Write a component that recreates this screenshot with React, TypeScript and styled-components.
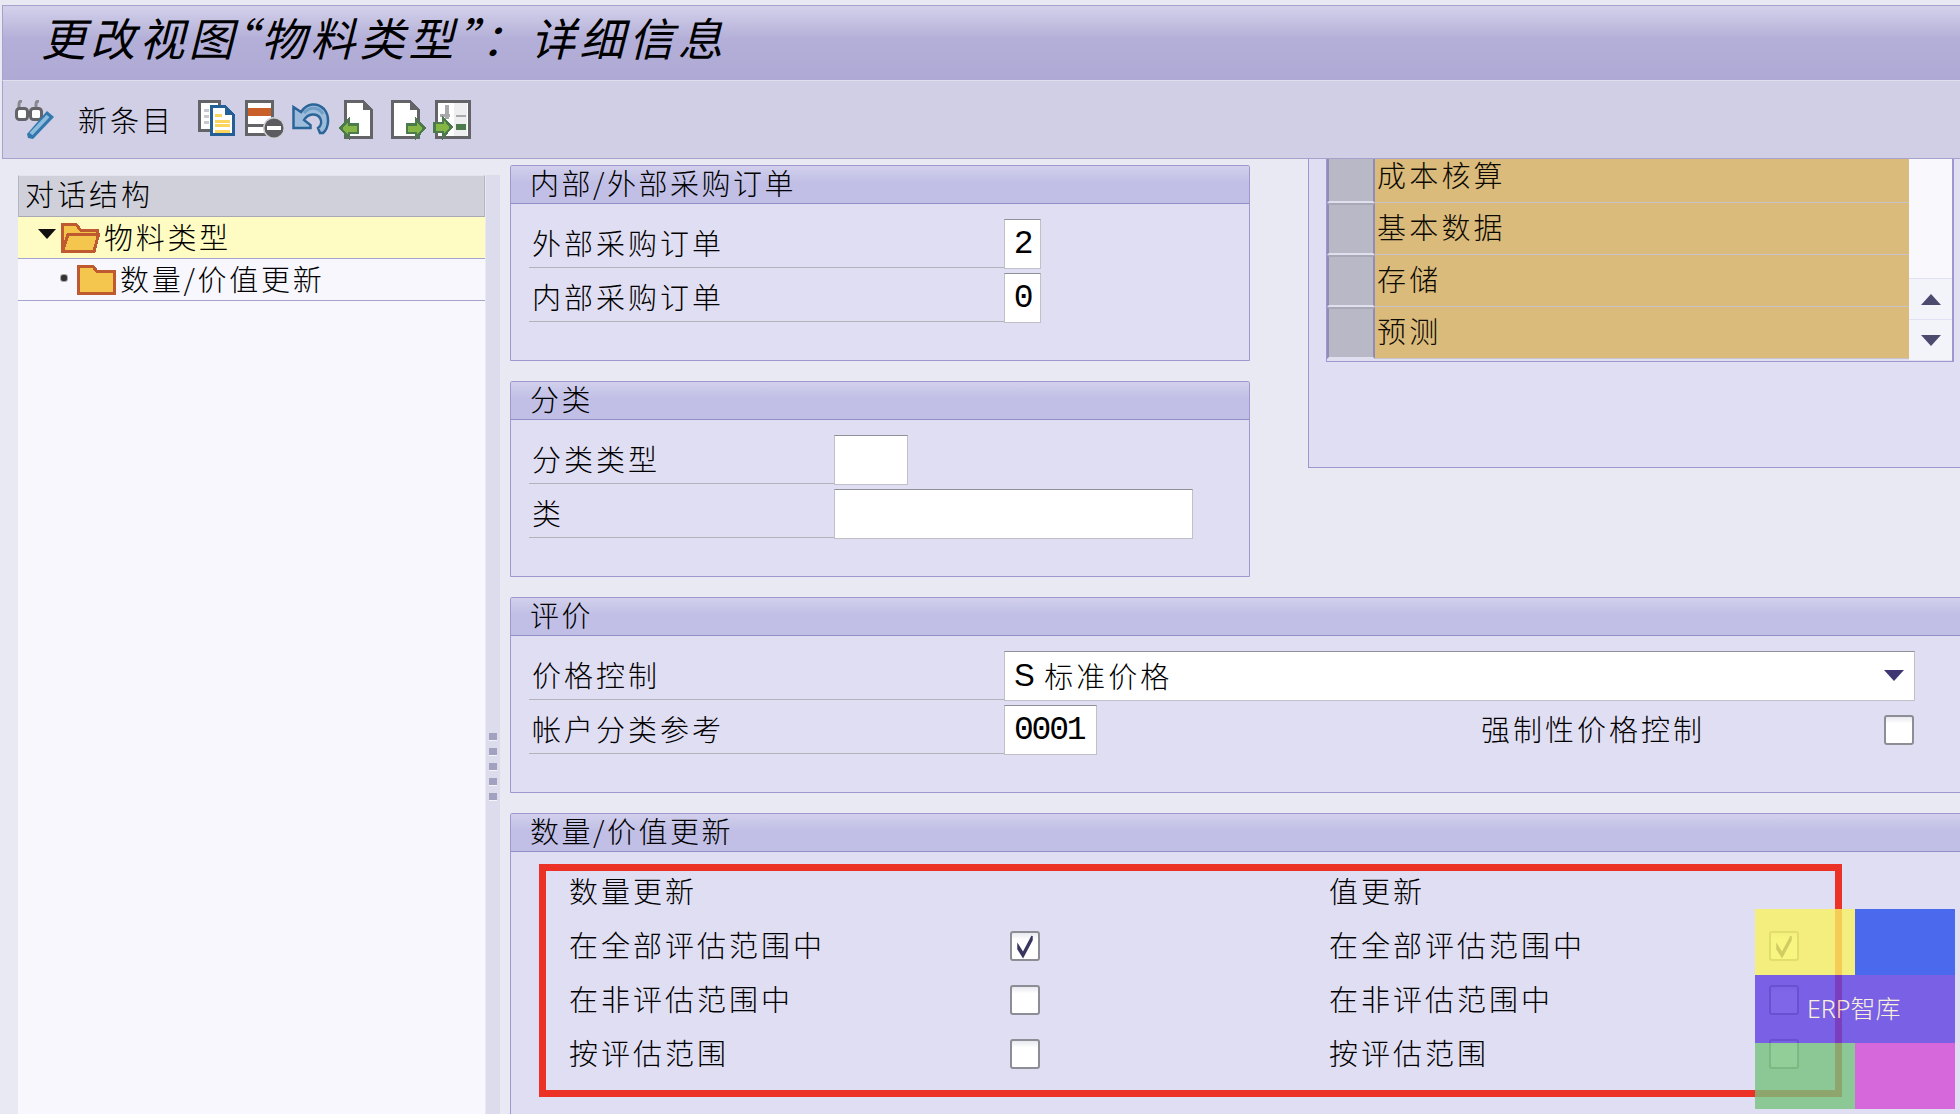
import React from "react";
import styled, { createGlobalStyle } from "styled-components";

const CJK = `"Noto Sans CJK SC", "Noto Sans", sans-serif`;

const Global = createGlobalStyle`
  html, body { margin: 0; padding: 0; background: #e9e9f3; }
  * { box-sizing: border-box; }
  body { font-family: ${CJK}; color: #000; }
`;

const Page = styled.div`
  width: 1960px;
  height: 1114px;
  overflow: hidden;
  position: relative;
  display: flex;
  flex-direction: column;
  padding-top: 5px;
  background: #e9e9f3;
  font-weight: 300;
  font-size: 29px;
  letter-spacing: 3px;
`;

const TitleBar = styled.div`
  height: 76px;
  margin-left: 2px;
  padding: 0 0 14px 38px;
  display: flex;
  align-items: center;
  background: linear-gradient(#d3d1ea 0, #b3afd8 45%, #aeaad5 100%);
  border-top: 1px solid #a5a2cc;
  border-left: 1px solid #a5a2cc;
  border-bottom: 1px solid #e0dff0;
`;

const TitleText = styled.h1`
  margin: 0;
  font-size: 45px;
  font-weight: 400;
  font-style: italic;
  letter-spacing: 4.2px;
  color: #000;
  line-height: 1;
  white-space: nowrap;
`;

const OpenQuote = styled.span`
  margin-left: -26px;
`;

const CloseQuote = styled.span`
  margin-right: -26px;
`;

const Toolbar = styled.div`
  height: 78px;
  margin-left: 2px;
  padding: 19px 0 0 12px;
  display: flex;
  align-items: flex-start;
  background: #d0cfe6;
  border-left: 1px solid #a5a2cc;
  border-bottom: 1px solid #a5a2cc;
`;

const ToolIcon = styled.svg<{ $gap?: number; $top?: number; $smooth?: boolean }>`
  display: block;
  flex: none;
  margin-left: ${(p) => p.$gap ?? 0}px;
  margin-top: ${(p) => p.$top ?? 0}px;
  shape-rendering: ${(p) => (p.$smooth ? "auto" : "crispEdges")};
`;

const NewEntry = styled.span`
  width: 91px;
  flex: none;
  margin-left: 23px;
  height: 40px;
  line-height: 38px;
  white-space: nowrap;
  color: #000;
`;

const Body = styled.div`
  flex: 1;
  min-height: 0;
  display: flex;
`;

const TreePane = styled.aside`
  width: 486px;
  flex: none;
  padding: 16px 1px 0 18px;
  display: flex;
  flex-direction: column;
`;

const TreeBox = styled.div`
  flex: 1;
  background: #f7f7fd;
`;

const TreeHeader = styled.div`
  height: 42px;
  padding-left: 6px;
  line-height: 34px;
  background: #d0d0da;
  border: 1px solid #b5b5c0;
  border-top-color: #e4e4ec;
  border-bottom: 1px solid #a9a9b5;
`;

const TreeRow = styled.div<{ $selected?: boolean; $indent: number }>`
  height: 42px;
  display: flex;
  align-items: center;
  padding-left: ${(p) => p.$indent}px;
  background: ${(p) => (p.$selected ? "#fefcc3" : "transparent")};
  border-bottom: 1px solid #a6a3cf;
  white-space: nowrap;
`;

const TreeLabel = styled.span`
  margin-left: 4px;
  margin-top: -3px;
  letter-spacing: 2.7px;
`;

const ExpandTriangle = styled.span`
  width: 0;
  height: 0;
  flex: none;
  margin-right: 5px;
  margin-top: -8px;
  border-left: 9px solid transparent;
  border-right: 9px solid transparent;
  border-top: 10px solid #101010;
`;

const Bullet = styled.span`
  width: 8px;
  height: 8px;
  flex: none;
  margin-right: 9px;
  margin-top: -3px;
  background: #333;
  border: 1px solid #aaa;
  border-radius: 3px;
`;

const Splitter = styled.div`
  width: 14px;
  flex: none;
  margin-top: 16px;
  display: flex;
  flex-direction: column;
  align-items: center;
  justify-content: flex-start;
  gap: 7px;
  padding-top: 558px;
  background: #dcdcec;
`;

const Grip = styled.span`
  width: 8px;
  height: 8px;
  background: #a3a1c0;
  border-bottom: 1px solid #f4f4fb;
`;

const Content = styled.main`
  flex: 1;
  min-width: 0;
  margin-left: 10px;
  overflow: hidden;
`;

const TopRow = styled.div`
  display: flex;
  align-items: flex-start;
`;

const TopLeft = styled.div`
  width: 740px;
  flex: none;
  padding-top: 6px;
  display: flex;
  flex-direction: column;
  gap: 20px;
`;

const Panel = styled.section<{ $height: number; $width?: number; $mt?: number }>`
  width: ${(p) => p.$width ?? 740}px;
  height: ${(p) => p.$height}px;
  margin-top: ${(p) => p.$mt ?? 0}px;
  flex: none;
  background: #e0def2;
  border: 1px solid #9d99d0;
  border-radius: 2px 2px 0 0;
`;

const PanelHeader = styled.h2`
  margin: 0;
  height: 38px;
  padding-left: 19px;
  line-height: 32px;
  font-size: inherit;
  font-weight: 300;
  letter-spacing: 2.5px;
  background: linear-gradient(#d2d0ec 0, #c1bfe5 45%);
  border-bottom: 1px solid #918dc6;
  white-space: nowrap;
`;

const FieldList = styled.div`
  padding: 15px 0 0 18px;
  display: flex;
  flex-direction: column;
  gap: 5px;
`;

const Field = styled.div<{ $width?: number }>`
  height: 49px;
  display: flex;
  width: ${(p) => (p.$width ? `${p.$width}px` : "auto")};
`;

const FieldLabel = styled.label<{ $width: number }>`
  width: ${(p) => p.$width}px;
  flex: none;
  padding-left: 3px;
  line-height: 47px;
  border-bottom: 1px solid #b3b3ba;
  white-space: nowrap;
`;

const Input = styled.div<{ $width: number; $center?: boolean }>`
  width: ${(p) => p.$width}px;
  flex: none;
  height: 50px;
  margin-bottom: -1px;
  padding: 0 ${(p) => (p.$center ? 0 : 9)}px;
  text-align: ${(p) => (p.$center ? "center" : "left")};
  background: #fff;
  border: 1px solid #c0c0c6;
  border-top-color: #8f8f96;
  font-family: "Liberation Mono", monospace;
  font-size: 33px;
  font-weight: 400;
  letter-spacing: -2.2px;
  line-height: 50px;
  color: #000;
`;

const Select = styled(Input)`
  position: relative;
  display: flex;
  align-items: center;
  font-family: "Liberation Sans", ${CJK};
  font-size: 31px;
  letter-spacing: 1.6px;
  white-space: nowrap;
  font-weight: 300;
`;

const SelectLetter = styled.span`
  margin-right: 8px;
  font-weight: 400;
`;

const SelectValue = styled.span`
  font-family: ${CJK};
  font-size: 29px;
  letter-spacing: 3px;
  margin-top: -3px;
`;

const SelectArrow = styled.span`
  position: absolute;
  right: 10px;
  top: 18px;
  width: 0;
  height: 0;
  border-left: 10px solid transparent;
  border-right: 10px solid transparent;
  border-top: 11px solid #3e3672;
`;

const SideLabel = styled.span`
  margin-left: 384px;
  line-height: 47px;
  white-space: nowrap;
  flex: 1;
`;

const CheckBox = styled.span<{ $shift?: number }>`
  width: 30px;
  height: 30px;
  flex: none;
  display: block;
  align-self: center;
  margin-right: ${(p) => p.$shift ?? 0}px;
  background: linear-gradient(#e8e8f0 0, #fff 25%);
  border: 2px solid #8d8d96;
  border-radius: 3px;
`;

const RightPanel = styled.section`
  width: 700px;
  height: 309px;
  flex: none;
  margin-left: 58px;
  padding-left: 17px;
  background: #e0def2;
  border: 1px solid #9d99d0;
  border-top: 0;
`;

const Table = styled.div`
  width: 628px;
  height: 203px;
  display: flex;
  overflow: hidden;
  border: 1px solid #9d99d0;
  border-top: 0;
  border-right-width: 2px;
`;

const TableRows = styled.div`
  width: 582px;
  flex: none;
`;

const TableRow = styled.div`
  height: 52px;
  display: flex;
  &:first-child {
    margin-top: -8px;
  }
`;

const RowSelector = styled.div`
  width: 48px;
  flex: none;
  background: #b8b8c6;
  border: 2px solid #e0dfee;
  border-left-color: #8f8db5;
  border-right-color: #8f8db5;
  border-top-color: #a8a8b6;
`;

const TableCell = styled.div`
  flex: 1;
  padding: 0 0 4px 2px;
  line-height: 46px;
  letter-spacing: 3.2px;
  background: #dbbb7b;
  border-bottom: 1px solid #c8c3c8;
  color: #0d0a04;
`;

const ScrollBar = styled.div`
  flex: 1;
  display: flex;
  flex-direction: column;
  background: #f9f9fd;
`;

const ScrollTrack = styled.div`
  flex: 1;
  border-bottom: 1px solid #e2e1f4;
`;

const ScrollButton = styled.div`
  height: 41px;
  display: flex;
  align-items: center;
  justify-content: center;
  background: #f3f3fa;
  border-bottom: 1px solid #e2e1f4;
`;

const ArrowUp = styled.span`
  width: 0;
  height: 0;
  border-left: 10px solid transparent;
  border-right: 10px solid transparent;
  border-bottom: 11px solid #4d4a70;
`;

const ArrowDown = styled.span`
  width: 0;
  height: 0;
  border-left: 10px solid transparent;
  border-right: 10px solid transparent;
  border-top: 11px solid #4d4a70;
`;

const RedBox = styled.div`
  width: 1303px;
  height: 233px;
  margin: 12px 0 0 28px;
  padding-left: 23px;
  border: 7px solid #ec3226;
  display: grid;
  grid-template-columns: 441px 30px 289px 440px 30px;
  grid-template-rows: 47px 54px 54px 54px;
`;

const UpdateHead = styled.div`
  height: 42px;
  line-height: 38px;
  white-space: nowrap;
`;

const UpdateLabel = styled.div`
  line-height: 53px;
  white-space: nowrap;
`;

const CheckBoxCell = styled.div`
  height: 55px;
  display: flex;
  align-items: center;
`;

const CheckMark = styled.svg`
  display: block;
  width: 26px;
  height: 26px;
`;

const Watermark = styled.div`
  position: absolute;
  left: 1755px;
  top: 909px;
  width: 200px;
  height: 200px;
  display: grid;
  grid-template-columns: 100px 100px;
  grid-template-rows: 66px 68px 66px;
  opacity: 0.8;
`;

const Swatch = styled.div<{ $color: string; $span?: boolean }>`
  background: ${(p) => p.$color};
  grid-column: ${(p) => (p.$span ? "1 / span 2" : "auto")};
  ${(p) => (p.$span ? "display: flex; align-items: center; padding: 0 0 4px 52px;" : "")}
`;

const WatermarkText = styled.span`
  font-family: "Noto Sans", ${CJK};
  font-size: 25px;
  font-weight: 300;
  letter-spacing: 0;
  color: #fff8d8;
  white-space: nowrap;
`;

const GREY = "#646468";
const BLUE = "#245f96";

function Glasses() {
  return (
    <ToolIcon $smooth width={40} height={40} viewBox="0 0 40 40">
      <path d="M4 9 V4 Q4 1 7 1" fill="none" stroke="#8a8a8e" strokeWidth="3" />
      <path d="M21 9 V4 Q21 1 24 1" fill="none" stroke="#8a8a8e" strokeWidth="3" />
      <rect x="1.5" y="8.5" width="11" height="11" rx="3" fill="#fff" stroke={GREY} strokeWidth="3" />
      <rect x="15.5" y="8.5" width="11" height="11" rx="3" fill="#fff" stroke={GREY} strokeWidth="3" />
      <rect x="12" y="11" width="4" height="3" fill={GREY} />
      <path d="M13 38 L12 34 L32 11 L39 17 L18 39 Z" fill="#3278ae" />
      <path d="M16 34 L33 16" stroke="#8fbbdc" strokeWidth="4" />
    </ToolIcon>
  );
}

function CopyIcon() {
  return (
    <ToolIcon $gap={29} width={37} height={36} viewBox="0 0 37 36">
      <rect x="1.5" y="1.5" width="20" height="29" fill="#fff" stroke={GREY} strokeWidth="3" />
      <rect x="6" y="9" width="5" height="3" fill="#c9c9cf" />
      <rect x="6" y="15" width="5" height="3" fill="#c9c9cf" />
      <rect x="6" y="21" width="5" height="3" fill="#c9c9cf" />
      <path d="M13.5 6.5 H27 L35.5 15 V34.5 H13.5 Z" fill="#fff" stroke={BLUE} strokeWidth="3" />
      <path d="M27 6 L36 15 H27 Z" fill={BLUE} />
      <rect x="17" y="14" width="7" height="3" fill="#fbd55d" />
      <rect x="17" y="20" width="15" height="3" fill="#fbd55d" />
      <rect x="17" y="24" width="15" height="3" fill="#fbd55d" />
      <rect x="17" y="30" width="15" height="3" fill="#fbd55d" />
    </ToolIcon>
  );
}

function DeleteRowIcon() {
  return (
    <ToolIcon $gap={10} width={40} height={40} viewBox="0 0 40 40">
      <rect x="1.5" y="1.5" width="26" height="33" fill="#fff" stroke={GREY} strokeWidth="3" />
      <rect x="3" y="8" width="23" height="8" fill="#c9602a" />
      <rect x="3" y="24" width="23" height="3" fill={GREY} />
      <circle cx="29" cy="28" r="11" fill="#cfcfd6" shapeRendering="auto" />
      <circle cx="29" cy="28" r="9.5" fill="#5c5c60" shapeRendering="auto" />
      <rect x="22" y="26" width="14" height="4" fill="#fff" />
    </ToolIcon>
  );
}

function UndoIcon() {
  return (
    <ToolIcon $gap={7} $top={3} width={38} height={32} viewBox="0 0 38 32">
      <path
        d="M1.5 4 V25 H18.5 V22 L12 17 C16 10 25 10 28 15 C30 19 29 23 26 25 L28 30 L31 30 C37 25 38 13 32 6 C25 -1 15 0 9 9 Z"
        fill="#9dbcdc"
        stroke="#2b6598"
        strokeWidth="2.5"
        shapeRendering="auto"
      />
      <path d="M12 10 C18 3 27 4 31 11" fill="none" stroke="#6f9ec6" strokeWidth="3" shapeRendering="auto" />
    </ToolIcon>
  );
}

const DocSheet = () => (
  <>
    <path d="M6.5 1.5 H24 L32.5 10 V37.5 H6.5 Z" fill="#fff" stroke={GREY} strokeWidth="3" />
    <path d="M24 1 L33 10 H24 Z" fill={GREY} />
  </>
);

function DocLeftIcon() {
  return (
    <ToolIcon $gap={9} width={36} height={40} viewBox="0 0 36 40">
      <DocSheet />
      <path d="M1.5 28 L10 19.5 V24.5 H19 V33 H10 V38 Z" fill="#85b545" stroke="#4d7a4d" strokeWidth="2.5" />
    </ToolIcon>
  );
}

function DocRightIcon() {
  return (
    <ToolIcon $gap={16} width={36} height={40} viewBox="0 0 36 40">
      <g transform="translate(-5 0)">
        <DocSheet />
      </g>
      <path d="M33.5 28 L25 19.5 V24.5 H16 V33 H25 V38 Z" fill="#85b545" stroke="#4d7a4d" strokeWidth="2.5" />
    </ToolIcon>
  );
}

function TableArrowIcon() {
  return (
    <ToolIcon $gap={6} width={38} height={40} viewBox="0 0 38 40">
      <rect x="3.5" y="1.5" width="33" height="36" fill="#fff" stroke={GREY} strokeWidth="3" />
      <rect x="21" y="3" width="13" height="33" fill="#eeeef0" />
      <rect x="23" y="15" width="10" height="2" fill="#a9a9ad" />
      <rect x="23" y="24" width="10" height="6" fill="#4d7a4d" />
      <rect x="7" y="14" width="10" height="3" fill="#a9a9ad" />
      <rect x="12" y="5" width="4" height="14" fill="#a9a9ad" />
      <path d="M18.5 27 L10 18 V23 H1.5 V32 H10 V37 Z" fill="#85b545" stroke="#4d7a4d" strokeWidth="2.5" />
    </ToolIcon>
  );
}

const FolderIcon = styled.svg`
  display: block;
  flex: none;
  width: 39px;
  height: 30px;
  shape-rendering: crispEdges;
`;

const OpenFolder = () => (
  <FolderIcon viewBox="0 0 39 30">
    <path d="M1.5 28.5 V1.5 H15 L20 7.5 H36 V11" fill="#f4c34a" stroke="#bf5a30" strokeWidth="3" />
    <path d="M1.5 28.5 L7 11.5 H37.5 L33 28.5 Z" fill="#f4c64d" stroke="#bf5a30" strokeWidth="3" />
  </FolderIcon>
);

const ClosedFolder = () => (
  <FolderIcon viewBox="0 0 39 30">
    <path d="M1.5 28.5 V1.5 H16 L20 6.5 H37.5 V28.5 Z" fill="#f4c64d" stroke="#bf5a30" strokeWidth="3" />
  </FolderIcon>
);

const tableRows = ["成本核算", "基本数据", "存储", "预测"];

const updateRows = [
  { label: "在全部评估范围中", checked: true },
  { label: "在非评估范围中", checked: false },
  { label: "按评估范围", checked: false },
];

function Tick() {
  return (
    <CheckMark viewBox="0 0 26 26">
      <path d="M6 12 L11 20 L20 3 L20 7 L11 24 L6 16 Z" fill="#3a3560" stroke="#3a3560" strokeWidth="1.5" />
    </CheckMark>
  );
}

export default function App() {
  return (
    <Page>
      <Global />
      <TitleBar>
        <TitleText>
          更改视图<OpenQuote>“</OpenQuote>物料类型<CloseQuote>”</CloseQuote>：详细信息
        </TitleText>
      </TitleBar>
      <Toolbar>
        <Glasses />
        <NewEntry>新条目</NewEntry>
        <CopyIcon />
        <DeleteRowIcon />
        <UndoIcon />
        <DocLeftIcon />
        <DocRightIcon />
        <TableArrowIcon />
      </Toolbar>
      <Body>
        <TreePane>
          <TreeBox>
            <TreeHeader>对话结构</TreeHeader>
            <TreeRow $selected $indent={20}>
              <ExpandTriangle />
              <OpenFolder />
              <TreeLabel>物料类型</TreeLabel>
            </TreeRow>
            <TreeRow $indent={42}>
              <Bullet />
              <ClosedFolder />
              <TreeLabel>数量/价值更新</TreeLabel>
            </TreeRow>
          </TreeBox>
        </TreePane>
        <Splitter>
          <Grip />
          <Grip />
          <Grip />
          <Grip />
          <Grip />
        </Splitter>
        <Content>
          <TopRow>
            <TopLeft>
              <Panel $height={196}>
                <PanelHeader>内部/外部采购订单</PanelHeader>
                <FieldList>
                  <Field>
                    <FieldLabel $width={475}>外部采购订单</FieldLabel>
                    <Input $width={37} $center>2</Input>
                  </Field>
                  <Field>
                    <FieldLabel $width={475}>内部采购订单</FieldLabel>
                    <Input $width={37} $center>0</Input>
                  </Field>
                </FieldList>
              </Panel>
              <Panel $height={196}>
                <PanelHeader>分类</PanelHeader>
                <FieldList>
                  <Field>
                    <FieldLabel $width={305}>分类类型</FieldLabel>
                    <Input $width={74} />
                  </Field>
                  <Field>
                    <FieldLabel $width={305}>类</FieldLabel>
                    <Input $width={359} />
                  </Field>
                </FieldList>
              </Panel>
            </TopLeft>
            <RightPanel>
              <Table>
                <TableRows>
                  {tableRows.map((r) => (
                    <TableRow key={r}>
                      <RowSelector />
                      <TableCell>{r}</TableCell>
                    </TableRow>
                  ))}
                </TableRows>
                <ScrollBar>
                  <ScrollTrack />
                  <ScrollButton>
                    <ArrowUp />
                  </ScrollButton>
                  <ScrollButton>
                    <ArrowDown />
                  </ScrollButton>
                </ScrollBar>
              </Table>
            </RightPanel>
          </TopRow>
          <Panel $height={196} $width={1500} $mt={20}>
            <PanelHeader>评价</PanelHeader>
            <FieldList>
              <Field $width={1386}>
                <FieldLabel $width={475}>价格控制</FieldLabel>
                <Select $width={911}>
                  <SelectLetter>S</SelectLetter>
                  <SelectValue>标准价格</SelectValue>
                  <SelectArrow />
                </Select>
              </Field>
              <Field $width={1386}>
                <FieldLabel $width={475}>帐户分类参考</FieldLabel>
                <Input $width={93}>0001</Input>
                <SideLabel>强制性价格控制</SideLabel>
                <CheckBox $shift={1} />
              </Field>
            </FieldList>
          </Panel>
          <Panel $height={340} $width={1500} $mt={20}>
            <PanelHeader>数量/价值更新</PanelHeader>
            <RedBox>
              <UpdateHead>数量更新</UpdateHead>
              <span />
              <span />
              <UpdateHead>值更新</UpdateHead>
              <span />
              {updateRows.map((row) => (
                <React.Fragment key={row.label}>
                  <UpdateLabel>{row.label}</UpdateLabel>
                  <CheckBoxCell>
                    <CheckBox>{row.checked && <Tick />}</CheckBox>
                  </CheckBoxCell>
                  <span />
                  <UpdateLabel>{row.label}</UpdateLabel>
                  <CheckBoxCell>
                    <CheckBox>{row.checked && <Tick />}</CheckBox>
                  </CheckBoxCell>
                </React.Fragment>
              ))}
            </RedBox>
          </Panel>
        </Content>
      </Body>
      <Watermark>
        <Swatch $color="#f8f362" />
        <Swatch $color="#264ded" />
        <Swatch $color="#6041e3" $span>
          <WatermarkText>ERP智库</WatermarkText>
        </Swatch>
        <Swatch $color="#77c37f" />
        <Swatch $color="#d44bd7" />
      </Watermark>
    </Page>
  );
}
